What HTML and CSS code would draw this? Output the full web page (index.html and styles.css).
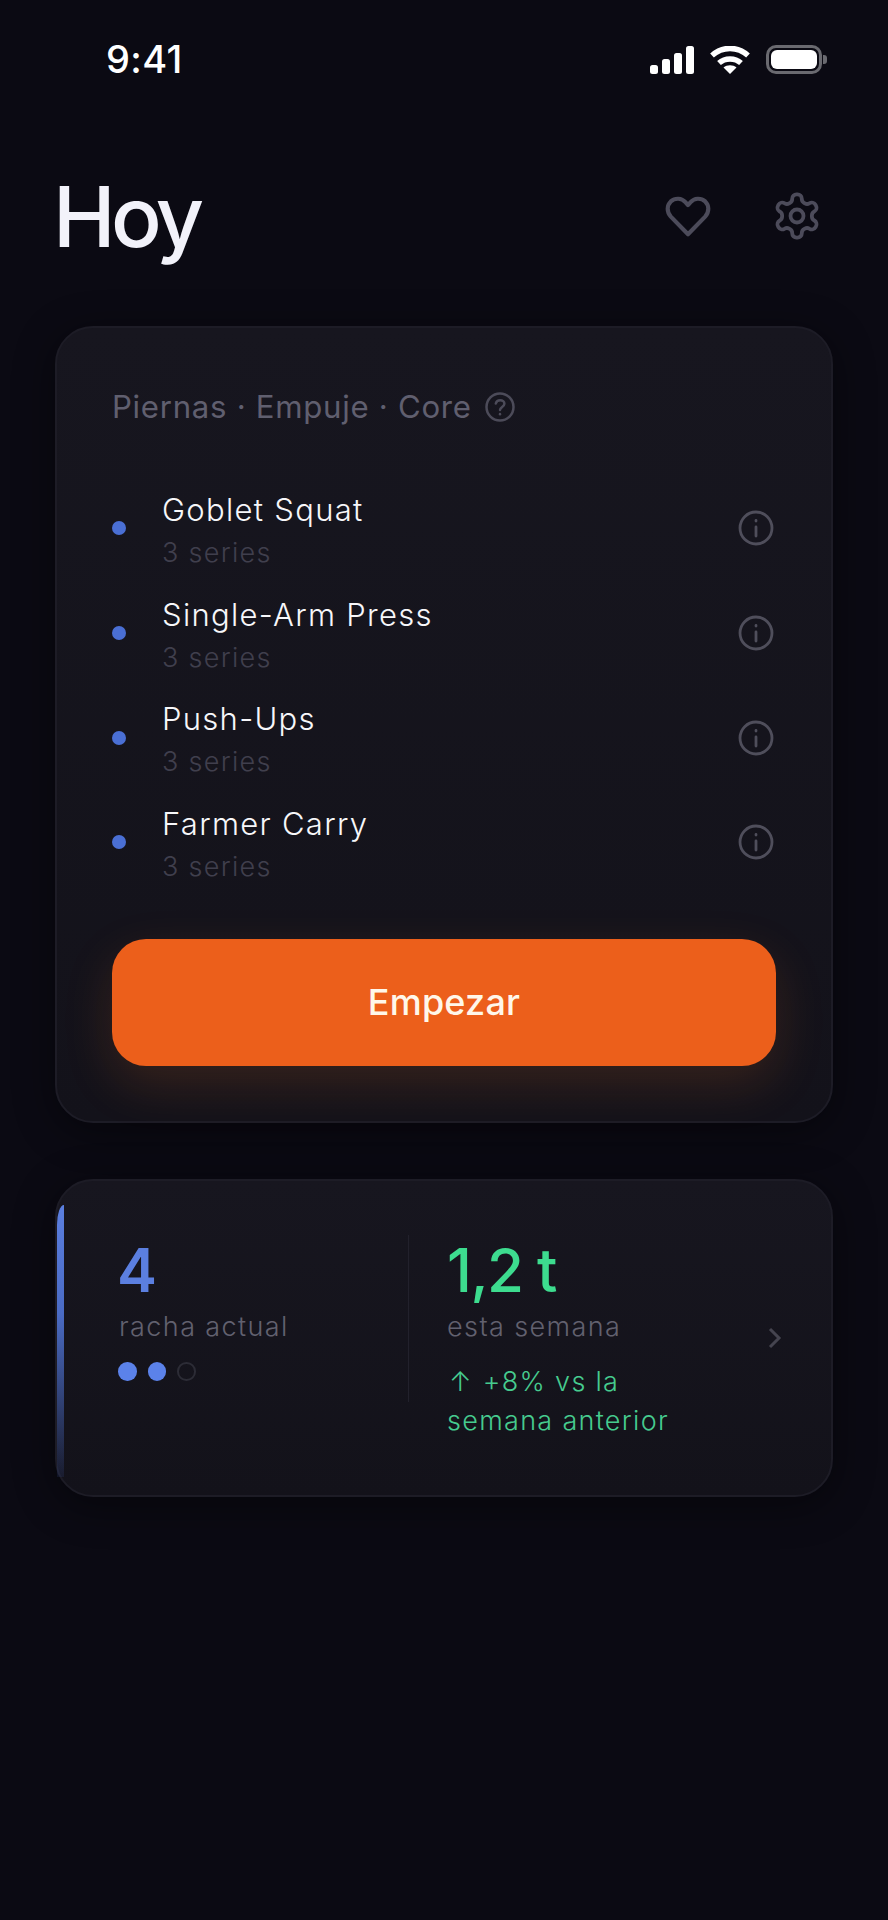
FILE: index.html
```html
<!DOCTYPE html>
<html lang="es">
<head>
<meta charset="utf-8">
<title>Hoy</title>
<link rel="stylesheet" href="styles.css">
</head>
<body>
<div class="app">
  <div class="status">
    <span class="time">9:41</span>
    <div class="status-icons">
      <svg class="signal" viewBox="0 0 44 28" width="44" height="28"><rect x="0" y="19" width="8" height="9" rx="2.500"/><rect x="12" y="13" width="8" height="15" rx="2.500"/><rect x="24" y="7" width="8" height="21" rx="2.500"/><rect x="36" y="0" width="8" height="28" rx="2.500"/></svg>
      <svg class="wifi" viewBox="0 0 40 28" width="40" height="28"><path d="M2 9.500C12.500 0 27.500 0 38 9.500" /><path d="M9 17C15 11.500 25 11.500 31 17"/><path class="wifi-tip" d="M20 28l-6.500-6.500c3.500-3 9.500-3 13 0z"/></svg>
      <div class="battery"><div class="battery-fill"></div><div class="battery-nub"></div></div>
    </div>
  </div>
  <header class="top">
    <h1>Hoy</h1>
    <div class="top-icons">
      <svg class="icon" viewBox="0 0 48 48" width="50" height="50"><path d="M24 41.500 7.500 24.600C3.500 20.300 3.500 13.800 7.500 10C11.700 6.200 18 6.700 21.500 10.700L24 13.500l2.500-2.800C30 6.700 36.300 6.200 40.500 10c4 3.800 4 10.300 0 14.600z"/></svg>
      <svg class="icon" viewBox="0 0 24 24" width="52" height="52"><path class="thin" d="M12.220 2h-.44a2 2 0 0 0-2 2v.18a2 2 0 0 1-1 1.730l-.43.25a2 2 0 0 1-2 0l-.15-.08a2 2 0 0 0-2.730.73l-.22.38a2 2 0 0 0 .73 2.730l.15.1a2 2 0 0 1 1 1.720v.51a2 2 0 0 1-1 1.740l-.15.09a2 2 0 0 0-.73 2.730l.22.38a2 2 0 0 0 2.730.73l.15-.08a2 2 0 0 1 2 0l.43.25a2 2 0 0 1 1 1.730V20a2 2 0 0 0 2 2h.44a2 2 0 0 0 2-2v-.18a2 2 0 0 1 1-1.730l.43-.25a2 2 0 0 1 2 0l.15.08a2 2 0 0 0 2.730-.73l.22-.39a2 2 0 0 0-.73-2.730l-.15-.08a2 2 0 0 1-1-1.740v-.5a2 2 0 0 1 1-1.740l.15-.09a2 2 0 0 0 .73-2.730l-.22-.38a2 2 0 0 0-2.730-.73l-.15.08a2 2 0 0 1-2 0l-.43-.25a2 2 0 0 1-1-1.730V4a2 2 0 0 0-2-2z"/><circle class="thin" cx="12" cy="12" r="3"/></svg>
    </div>
  </header>

  <section class="card workout">
    <div class="focus">
      <span>Piernas · Empuje · Core</span>
      <svg class="help" viewBox="0 0 30 30" width="30" height="30"><circle cx="15" cy="15" r="13.500"/><path d="M10.800 11.500c.6-2.200 2.300-3.300 4.400-3.300 2.400 0 4.200 1.500 4.200 3.500 0 3.100-4.400 3.400-4.400 6.300"/><path d="M15 22v.2"/></svg>
    </div>
    <ul class="list">
      <li class="row"><i class="dot"></i><div class="row-text"><div class="name">Goblet Squat</div><div class="sets">3 series</div></div><svg class="info" viewBox="0 0 36 36" width="36" height="36"><circle cx="18" cy="18" r="16"/><path d="M18 17v9"/><path d="M18 10.500v.5"/></svg></li>
      <li class="row"><i class="dot"></i><div class="row-text"><div class="name">Single-Arm Press</div><div class="sets">3 series</div></div><svg class="info" viewBox="0 0 36 36" width="36" height="36"><circle cx="18" cy="18" r="16"/><path d="M18 17v9"/><path d="M18 10.500v.5"/></svg></li>
      <li class="row"><i class="dot"></i><div class="row-text"><div class="name">Push-Ups</div><div class="sets">3 series</div></div><svg class="info" viewBox="0 0 36 36" width="36" height="36"><circle cx="18" cy="18" r="16"/><path d="M18 17v9"/><path d="M18 10.500v.5"/></svg></li>
      <li class="row"><i class="dot"></i><div class="row-text"><div class="name">Farmer Carry</div><div class="sets">3 series</div></div><svg class="info" viewBox="0 0 36 36" width="36" height="36"><circle cx="18" cy="18" r="16"/><path d="M18 17v9"/><path d="M18 10.500v.5"/></svg></li>
    </ul>
    <button class="start">Empezar</button>
  </section>

  <section class="card stats">
    <div class="accent"></div>
    <div class="stat streak">
      <div class="num blue">4</div>
      <div class="label">racha actual</div>
      <div class="dots"><i class="on"></i><i class="on"></i><i class="off"></i></div>
    </div>
    <div class="divider"></div>
    <div class="stat volume">
      <div class="num green">1,2 t</div>
      <div class="label">esta semana</div>
      <div class="delta"><span class="arrow">↑</span>+8% vs la<br>semana anterior</div>
    </div>
    <svg class="chev" viewBox="0 0 14 22" width="14" height="22"><path d="M2 2l9 9-9 9"/></svg>
  </section>
</div>
</body>
</html>
```
FILE: styles.css
```css
* { box-sizing: border-box; }
html, body { margin: 0; background: #0b0a13; }
body { font-family: Inter, "Liberation Sans", sans-serif; color: #fff; }
.app { width: 888px; height: 1920px; padding: 0 55px; overflow: hidden; }

.status { height: 118px; padding: 38px 11px 0 51px; display: flex; justify-content: space-between; align-items: flex-start; }
.time { font-size: 38px; line-height: 42px; font-weight: 500; letter-spacing: 0.4px; }
.status-icons { display: flex; align-items: center; gap: 16px; padding-top: 7px; }
.signal rect { fill: #fff; }
.wifi path { fill: none; stroke: #fff; stroke-width: 5.500; }
.wifi .wifi-tip { fill: #fff; stroke: none; }
.battery { width: 56px; height: 29px; border: 3px solid #6a6a70; border-radius: 10px; padding: 2px; position: relative; }
.battery-fill { width: 100%; height: 100%; background: #fff; border-radius: 6px; }
.battery-nub { position: absolute; right: -8px; top: 7px; width: 4px; height: 9px; background: #6a6a70; border-radius: 0 3px 3px 0; }

.top { height: 208px; display: flex; justify-content: space-between; align-items: flex-start; }
h1 { margin: 49px 0 0 -2px; font-size: 84px; line-height: 100px; font-weight: 500; letter-spacing: -4.500px; color: #f2f2fa; }
.top-icons { display: flex; align-items: center; gap: 58px; padding: 72px 10px 0 0; }
.icon path, .icon circle { fill: none; stroke: #4c4b5a; stroke-width: 4; stroke-linejoin: round; }
.icon .thin { stroke-width: 1.750; }

.card { background: linear-gradient(180deg, #17161f 0%, #13121a 100%); border: 2px solid #1d1c26; border-radius: 38px; box-shadow: 0 8px 40px rgba(0, 0, 0, .45); }

.workout { height: 797px; padding: 61px 55px 0 55px; }
.focus { display: flex; align-items: center; gap: 13px; height: 36px; font-size: 31.200px; letter-spacing: 0.7px; color: #605f6f; }
.help { flex: none; }
.help circle, .help path { fill: none; stroke: #4c4b59; stroke-width: 2.500; stroke-linecap: round; }
.list { list-style: none; margin: 51px 0 0; padding: 0; }
.row { height: 104.700px; display: flex; align-items: center; }
.dot { width: 14px; height: 14px; border-radius: 50%; background: #4a6fd4; margin-right: 36px; flex: none; }
.row-text { flex: 1; }
.name { font-size: 31px; line-height: 44px; font-weight: 300; letter-spacing: 1.300px; color: #f7f7fa; }
.sets { font-size: 27px; line-height: 32px; margin-top: 5px; font-weight: 300; letter-spacing: 1.300px; color: #403f4d; }
.info { margin-right: 2px; flex: none; }
.info circle, .info path { fill: none; stroke: #4f4e5b; stroke-width: 2.800; stroke-linecap: round; }

.start { display: block; width: 100%; height: 127px; margin-top: 44px; border: 0; border-radius: 34px; background: #ec5f1b; color: #fff7ea; font: 500 36px Inter, "Liberation Sans", sans-serif; letter-spacing: 0.2px; box-shadow: 0 18px 50px rgba(240, 120, 40, .16); }

.stats { height: 318px; margin-top: 56px; position: relative; display: flex; align-items: flex-start; padding: 54px 0 0 62px; }
.accent { position: absolute; left: 0; top: 24px; bottom: 18px; width: 7px; border-top-left-radius: 7px 20px; background: linear-gradient(180deg, #5b7fe0 0%, #4a6bc4 40%, rgba(60, 84, 160, .15) 100%); }
.stat { flex: none; }
.streak { width: 289px; }
.volume { width: 300px; padding-left: 38px; }
.num { font-size: 60px; line-height: 70px; font-weight: 600; letter-spacing: -1.500px; }
.blue { color: #5b7fe0; margin-left: -2px; }
.green { color: #3ddc8f; font-weight: 500; }
.label { font-size: 27px; line-height: 34px; font-weight: 300; letter-spacing: 1.400px; color: #62616f; margin-top: 5px; }
.dots { display: flex; gap: 11px; margin: 18px 0 0 -1px; }
.dots i { width: 18.500px; height: 18.500px; border-radius: 50%; }
.dots .on { background: #5b82ea; }
.dots .off { border: 2px solid #2c2c36; }
.divider { width: 1px; height: 167px; background: #22212c; flex: none; }
.delta { font-size: 27px; line-height: 39px; font-weight: 300; letter-spacing: 1.300px; color: #46cb8f; margin-top: 18px; }
.arrow { margin: 0 10px 0 2px; }
.chev { position: absolute; right: 49px; top: 146px; }
.chev path { fill: none; stroke: #45444f; stroke-width: 3; }
```
